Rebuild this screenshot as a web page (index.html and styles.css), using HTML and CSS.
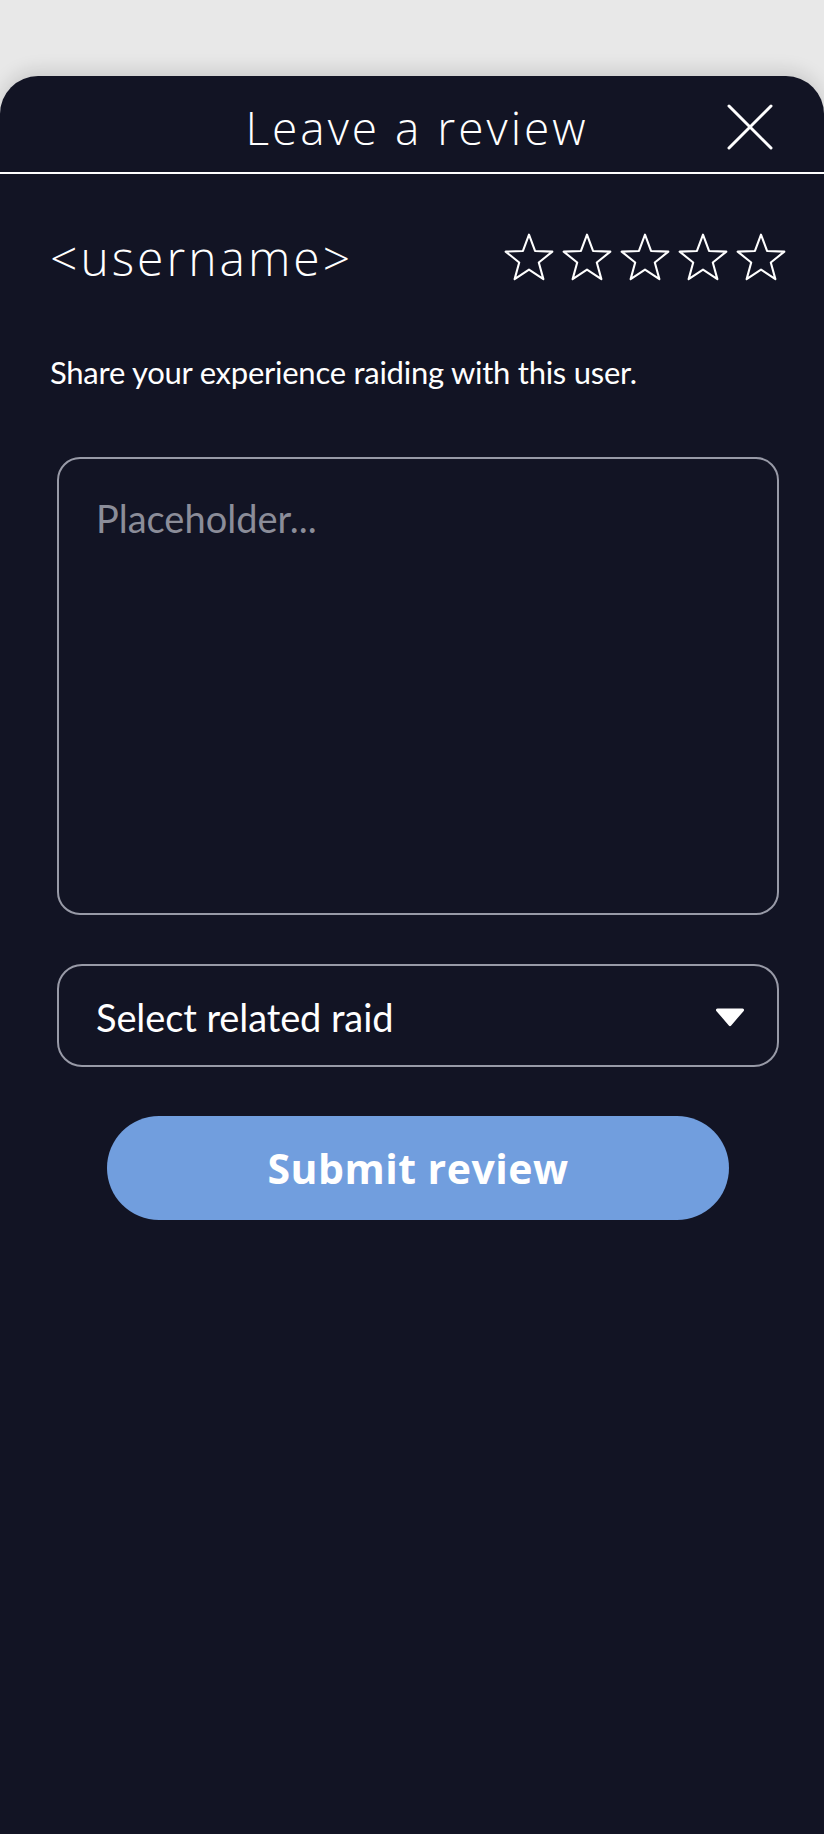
FILE: index.html
```html
<!DOCTYPE html>
<html lang="en">
<head>
    <meta charset="UTF-8">
    <meta name="viewport" content="width=device-width, initial-scale=1.0">
    <title>Leave a review</title>
    <link rel="stylesheet" href="styles.css">
</head>
<body>
    <div class="sheet">
        <!-- Sheet header -->
        <header class="sheet-header">
            <h1>Leave a review</h1>
            <button class="close" type="button" aria-label="Close">
                <svg viewBox="0 0 48 48" width="48" height="48">
                    <path d="M3 3L45 45M45 3L3 45" fill="none" stroke="#fff" stroke-width="3" stroke-linecap="round"/>
                </svg>
            </button>
        </header>

        <div class="sheet-body">
            <!-- User + rating -->
            <div class="user-row">
                <span class="username">&lt;username&gt;</span>
                <div class="stars">
                    <svg class="star" viewBox="0 0 24 24"><path d="M12 .8l2.9 7.8 8.3.35-6.5 5.2 2.2 8-6.9-4.6-6.9 4.6 2.2-8L.8 8.95l8.3-.35z"/></svg>
                    <svg class="star" viewBox="0 0 24 24"><path d="M12 .8l2.9 7.8 8.3.35-6.5 5.2 2.2 8-6.9-4.6-6.9 4.6 2.2-8L.8 8.95l8.3-.35z"/></svg>
                    <svg class="star" viewBox="0 0 24 24"><path d="M12 .8l2.9 7.8 8.3.35-6.5 5.2 2.2 8-6.9-4.6-6.9 4.6 2.2-8L.8 8.95l8.3-.35z"/></svg>
                    <svg class="star" viewBox="0 0 24 24"><path d="M12 .8l2.9 7.8 8.3.35-6.5 5.2 2.2 8-6.9-4.6-6.9 4.6 2.2-8L.8 8.95l8.3-.35z"/></svg>
                    <svg class="star" viewBox="0 0 24 24"><path d="M12 .8l2.9 7.8 8.3.35-6.5 5.2 2.2 8-6.9-4.6-6.9 4.6 2.2-8L.8 8.95l8.3-.35z"/></svg>
                </div>
            </div>

            <p class="hint">Share your experience raiding with this user.</p>

            <!-- Review form -->
            <form class="review-form">
                <textarea class="review-text" placeholder="Placeholder..."></textarea>

                <div class="select-box">
                    <span>Select related raid</span>
                    <svg viewBox="0 0 30 20" width="30" height="20">
                        <path d="M2.5 1.5h25a1.5 1.5 0 0 1 1.2 2.4L16.2 18.4a1.5 1.5 0 0 1-2.4 0L1.3 3.9A1.5 1.5 0 0 1 2.5 1.5z" fill="#fff"/>
                    </svg>
                </div>

                <button class="submit" type="submit">Submit review</button>
            </form>
        </div>
    </div>
</body>
</html>
```

FILE: styles.css
```css
/* General Reset */
* {
    margin: 0;
    padding: 0;
    box-sizing: border-box;
}

body {
    background: #e8e8e8;
    font-family: 'Lato', 'Liberation Sans', sans-serif;
    color: #fff;
    overflow: hidden;
}

.sheet {
    margin-top: 76px;
    min-height: 1758px;
    background: #121424;
    border-radius: 38px 38px 0 0;
    box-shadow: 0 -6px 18px rgba(0, 0, 0, 0.12);
}

/* Header */
.sheet-header {
    display: grid;
    grid-template-columns: 1fr auto 1fr;
    align-items: center;
    height: 98px;
    padding: 6px 50px 0 60px;
    border-bottom: 2px solid #fff;
}

.sheet-header h1 {
    grid-column: 2;
    font-family: 'Open Sans', sans-serif;
    font-weight: 300;
    font-size: 46px;
    line-height: 1;
    letter-spacing: 3px;
}

.close {
    grid-column: 3;
    justify-self: end;
    display: flex;
    background: none;
    border: none;
    cursor: pointer;
}

/* Body */
.sheet-body {
    padding: 59px 38px 0 50px;
}

.user-row {
    display: flex;
    justify-content: space-between;
    align-items: center;
    height: 50px;
}

.username {
    font-family: 'Open Sans', sans-serif;
    font-weight: 300;
    font-size: 48px;
    line-height: 1;
    letter-spacing: 3px;
}

.stars {
    display: flex;
    gap: 8px;
}

.star {
    width: 50px;
    height: 50px;
    fill: none;
    stroke: #fff;
    stroke-width: 1;
    stroke-linejoin: round;
}

.hint {
    margin-top: 71px;
    font-size: 31px;
    line-height: 1.2;
    letter-spacing: -0.25px;
}

.review-form {
    display: flex;
    flex-direction: column;
    margin: 66px 7px 0 7px;
}

.review-text {
    height: 458px;
    padding: 36px 37px;
    background: transparent;
    border: 2px solid #989aa7;
    border-radius: 23px;
    color: #fff;
    font-family: 'Lato', 'Liberation Sans', sans-serif;
    font-size: 38px;
    resize: none;
    outline: none;
}

.review-text::placeholder {
    color: #8b8d99;
}

.select-box {
    display: flex;
    justify-content: space-between;
    align-items: center;
    height: 103px;
    margin-top: 49px;
    padding: 2px 32px 0 37px;
    border: 2px solid #989aa7;
    border-radius: 25px;
    font-size: 38px;
    letter-spacing: -0.1px;
    cursor: pointer;
}

.submit {
    align-self: center;
    width: 622px;
    height: 104px;
    margin-top: 49px;
    background: #719ede;
    border: none;
    border-radius: 52px;
    color: #fff;
    font-family: 'Open Sans', sans-serif;
    font-weight: 700;
    font-size: 41px;
    letter-spacing: 0.5px;
    cursor: pointer;
}
```
